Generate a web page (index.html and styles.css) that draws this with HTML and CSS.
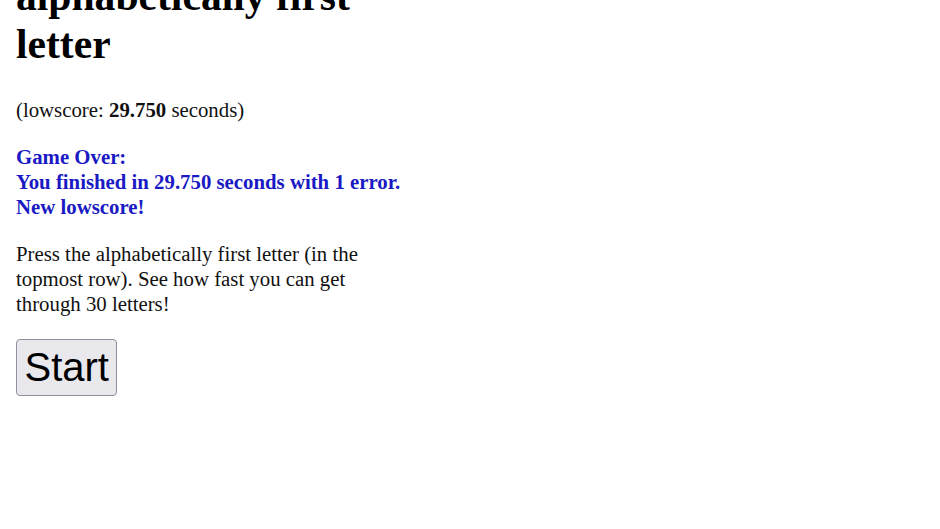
FILE: index.html
```html
<!DOCTYPE html>
<html>
<head>
<meta charset="utf-8">
<title>Alphabetically first letter</title>
<link rel="stylesheet" href="styles.css">
</head>
<body>
<main class="game">
  <h1 class="title">Press the alphabetically first letter</h1>
  <p class="score">(lowscore: <b>29.750</b> seconds)</p>
  <p class="result">Game Over:<br>You finished in 29.750 seconds with 1 error.<br>New lowscore!</p>
  <p class="intro">Press the alphabetically first letter (in the topmost row). See how fast you can get through 30 letters!</p>
  <button class="start">Start</button>
</main>
</body>
</html>
```

FILE: styles.css
```css
html, body {
  margin: 0;
  padding: 0;
  background: #ffffff;
}
body {
  font-family: "Liberation Serif", "Times New Roman", serif;
  font-size: 20.8px;
  color: #111111;
}
.game {
  width: 396px;
  padding-left: 16px;
  margin-top: -76px;
}
.title {
  font-size: 41.6px;
  line-height: 48px;
  font-weight: bold;
  margin: 0 0 29px 0;
  color: #000;
}
.score, .result, .intro {
  line-height: 25px;
  margin: 0 0 22px 0;
}
.result {
  color: #1a1ac4;
  font-weight: bold;
}
.intro {
  margin-bottom: 22.5px;
}
.start {
  font-family: "Liberation Sans", Arial, sans-serif;
  font-size: 40px;
  line-height: 46px;
  padding: 4.5px 7.5px;
  background: #e9e9ed;
  color: #000;
  border: 1px solid #8f8f9d;
  border-radius: 4px;
  margin: 0;
}
```
